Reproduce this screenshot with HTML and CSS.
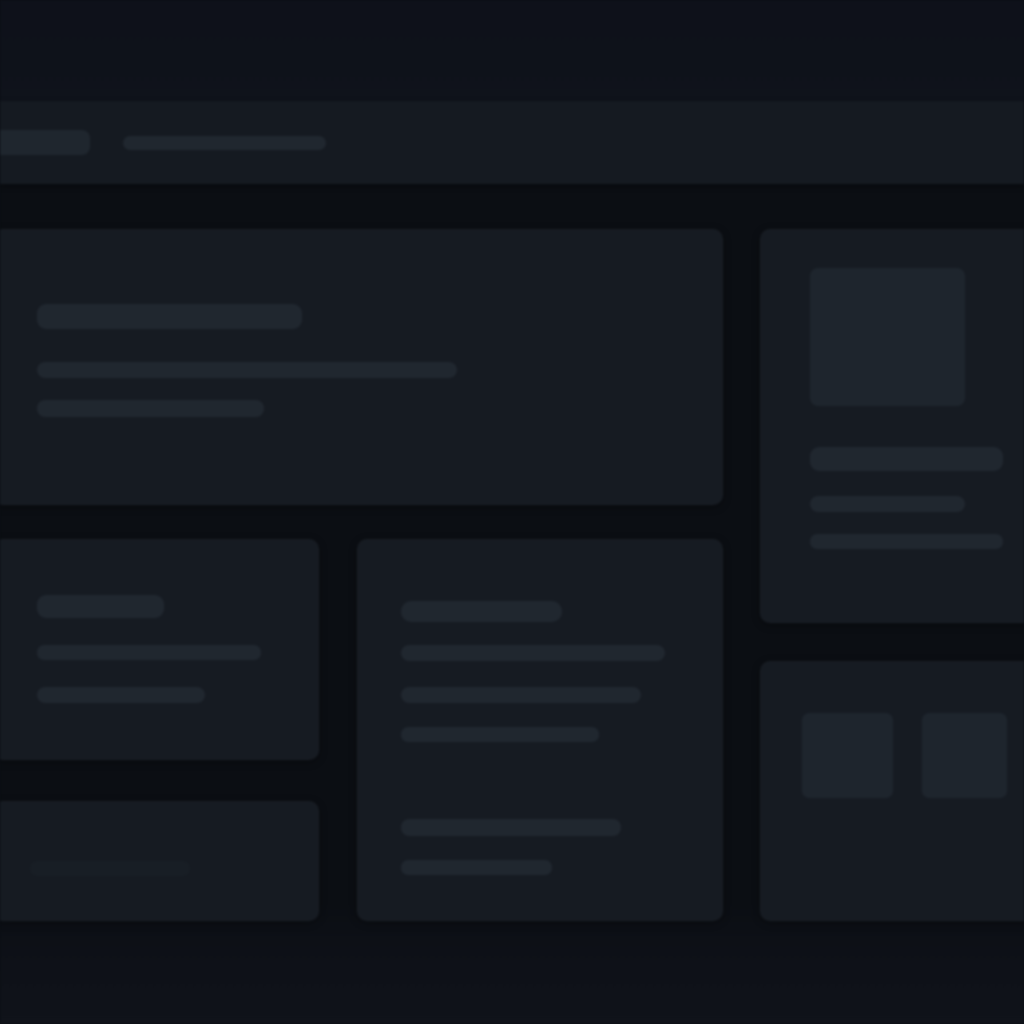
FILE: index.html
```html
<!DOCTYPE html>
<html lang="en">
<head>
<meta charset="utf-8">
<title>Loading</title>
<link rel="stylesheet" href="styles.css">
</head>
<body>
<div class="page">
  <div class="topband"></div>
  <header class="header">
    <div class="sk hpill1"></div>
    <div class="sk hpill2"></div>
  </header>
  <main class="main">
    <section class="left">
      <div class="card hero">
        <div class="sk b-h25 w265"></div>
        <div class="sk b-16 w420 mt33"></div>
        <div class="sk b-17 w227 mt22"></div>
      </div>
      <div class="card mid">
        <div class="sk b-h23 w127"></div>
        <div class="sk b-15 w224 mt27"></div>
        <div class="sk b-16 w168 mt27"></div>
      </div>
      <div class="card tall">
        <div class="sk b-21 w161"></div>
        <div class="sk b-16 w264 mt23"></div>
        <div class="sk b-16 w240 mt26"></div>
        <div class="sk b-15 w198 mt24"></div>
        <div class="sk b-17 w220 mt77"></div>
        <div class="sk b-15 w151 mt24"></div>
      </div>
      <div class="card low">
        <div class="sk faint"></div>
      </div>
    </section>
    <aside class="right">
      <div class="card profile">
        <div class="sk square"></div>
        <div class="sk b-24 w193 mt41"></div>
        <div class="sk b-16 w155 mt25"></div>
        <div class="sk b-15 w193 mt22"></div>
      </div>
      <div class="card tiles">
        <div class="sk tile t1"></div>
        <div class="sk tile t2"></div>
      </div>
    </aside>
  </main>
</div>
</body>
</html>
```

FILE: styles.css
```css
html, body {
  margin: 0;
  padding: 0;
  width: 1024px;
  height: 1024px;
  overflow: hidden;
  background: #0b0e13;
  font-family: "Inter", "Liberation Sans", sans-serif;
}

.page {
  width: 1024px;
  height: 1024px;
  overflow: hidden;
  background: linear-gradient(180deg, #0b0e13 0%, #0b0e13 88%, #0e1118 94%, #10131a 100%);
  filter: blur(0.9px);
}

.topband {
  height: 101px;
  background: linear-gradient(180deg, #0e111a 0%, #0f131b 100%);
}

.header {
  height: 83px;
  background: #151a21;
  display: flex;
  align-items: center;
  gap: 33px;
  box-shadow: 0 2px 6px rgba(0, 0, 0, 0.35);
}

.sk {
  background: #20272f;
  border-radius: 8px;
}

.hpill1 {
  width: 100px;
  height: 25px;
  margin-left: -10px;
  margin-top: -1px;
  border-radius: 8px;
  background: #1f262e;
}

.hpill2 {
  width: 203px;
  height: 14px;
  border-radius: 7px;
  background: #20272f;
}

.main {
  display: flex;
  gap: 37px;
  margin-top: 45px;
  margin-left: -7px;
}

.left {
  width: 730px;
  flex: none;
  display: grid;
  grid-template-columns: 326px 366px;
  grid-template-rows: 276px 221px 127px;
  column-gap: 38px;
  row-gap: 34px;
}

.right {
  width: 300px;
  flex: none;
  display: flex;
  flex-direction: column;
  gap: 38px;
}

.card {
  background: #161b22;
  border-radius: 10px;
  box-sizing: border-box;
  border: 1px solid rgba(255, 255, 255, 0.015);
  box-shadow: 0 2px 8px rgba(0, 0, 0, 0.3);
}

.hero {
  grid-column: 1 / 3;
  grid-row: 1;
  padding: 74px 0 0 43px;
}

.mid {
  grid-column: 1;
  grid-row: 2;
  padding: 55px 0 0 43px;
}

.tall {
  grid-column: 2;
  grid-row: 2 / 4;
  padding: 61px 0 0 43px;
}

.low {
  grid-column: 1;
  grid-row: 3;
  margin-top: 7px;
  padding: 59px 0 0 36px;
}

.profile {
  height: 394px;
  padding: 38px 0 0 49px;
}

.tiles {
  height: 260px;
  padding: 51px 0 0 41px;
  display: flex;
  gap: 29px;
  align-items: flex-start;
}

.square {
  width: 155px;
  height: 138px;
  background: #1e252d;
  border-radius: 8px;
}

.tile {
  height: 85px;
  background: #1e252d;
  border-radius: 7px;
}

.t1 { width: 91px; }
.t2 { width: 85px; }

.faint {
  width: 160px;
  height: 15px;
  background: #181e25;
  border-radius: 7px;
}

.b-h25 { height: 25px; border-radius: 9px; }
.b-h23 { height: 23px; border-radius: 9px; }
.b-24 { height: 24px; border-radius: 9px; }
.b-21 { height: 21px; border-radius: 10px; }
.b-17 { height: 17px; border-radius: 8px; }
.b-16 { height: 16px; border-radius: 8px; }
.b-15 { height: 15px; border-radius: 7px; }

.w127 { width: 127px; }
.w151 { width: 151px; }
.w155 { width: 155px; }
.w161 { width: 161px; }
.w168 { width: 168px; }
.w193 { width: 193px; }
.w198 { width: 198px; }
.w220 { width: 220px; }
.w224 { width: 224px; }
.w227 { width: 227px; }
.w240 { width: 240px; }
.w264 { width: 264px; }
.w265 { width: 265px; }
.w420 { width: 420px; }

.mt22 { margin-top: 22px; }
.mt23 { margin-top: 23px; }
.mt24 { margin-top: 24px; }
.mt25 { margin-top: 25px; }
.mt26 { margin-top: 26px; }
.mt27 { margin-top: 27px; }
.mt33 { margin-top: 33px; }
.mt41 { margin-top: 41px; }
.mt77 { margin-top: 77px; }
```
